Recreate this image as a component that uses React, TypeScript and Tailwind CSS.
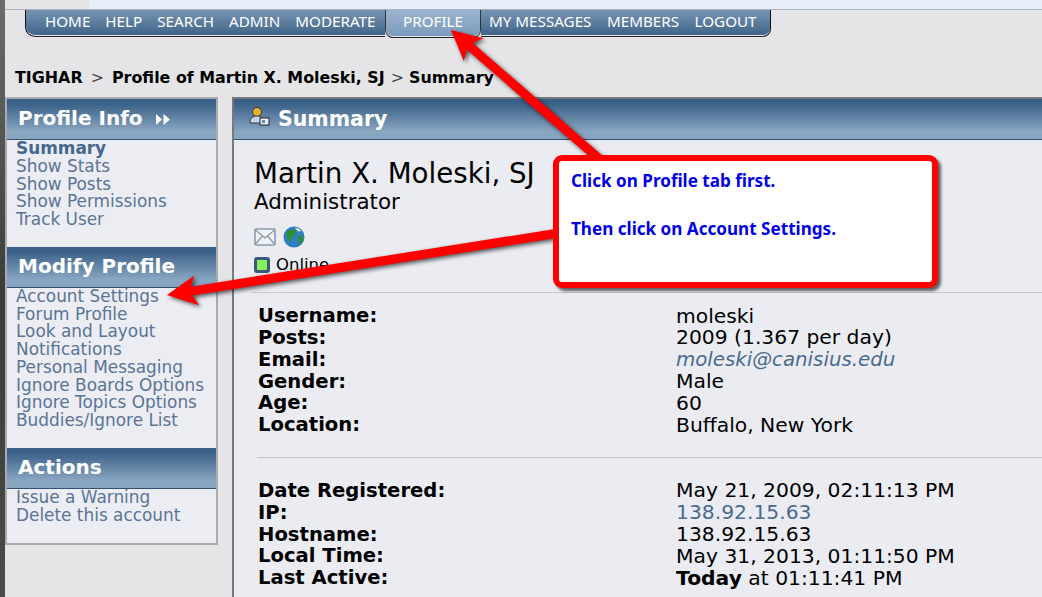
import type { ReactNode } from "react";

type Pt = [number, number];

// red snagit style arrow from tail to tip
function arrowPoints(tail: Pt, tip: Pt, shaft: number, headLen: number, headHalf: number) {
  const dx = tail[0] - tip[0];
  const dy = tail[1] - tip[1];
  const len = Math.hypot(dx, dy);
  const ux = dx / len;
  const uy = dy / len;
  const nx = -uy;
  const ny = ux;
  const at = (a: number, b: number) => `${tip[0] + ux * a + nx * b},${tip[1] + uy * a + ny * b}`;
  return [
    at(0, 0),
    at(headLen, headHalf),
    at(headLen - 5, shaft),
    at(len, shaft),
    at(len, -shaft),
    at(headLen - 5, -shaft),
    at(headLen, -headHalf),
  ].join(" ");
}

const headerBar =
  "h-[41px] flex items-center bg-gradient-to-b from-[#3a6087] from-10% to-[#88a5c1] to-80% border-b border-[#2f5070] text-white font-bold";

function SideSection({ title, icon, links }: { title: string; icon?: ReactNode; links: ReactNode[] }) {
  return (
    <div>
      <div className={`${headerBar} pb-[2px] pl-[11px] text-[20px]`}>
        {title}
        {icon}
      </div>
      <ul className="pl-[9px] text-[16.9px] leading-[17.75px] text-[#5a7496]">
        {links.map((l, i) => (
          <li key={i}>{l}</li>
        ))}
      </ul>
    </div>
  );
}

function Row({ label, children }: { label: string; children: ReactNode }) {
  return (
    <div className="flex h-[21.8px] items-center text-[20.3px] text-black">
      <div className="w-[418px] text-[19.6px] font-bold">{label}</div>
      <div>{children}</div>
    </div>
  );
}

const navLeft = ["HOME", "HELP", "SEARCH", "ADMIN", "MODERATE"];
const navRight = ["MY MESSAGES", "MEMBERS", "LOGOUT"];

export default function App() {
  return (
    <div
      className="relative flex h-[597px] w-[1042px] overflow-hidden bg-[#e5e5e8]"
      style={{ fontFamily: '"DejaVu Sans", Verdana, sans-serif' }}
    >
      <div className="w-[5px] shrink-0 bg-gradient-to-b from-[#6a6e6a] via-[#3a3c3a] to-[#4a4c4a]" />

      <div className="flex min-w-0 flex-1 flex-col">
        {/* top strip */}
        <div className="flex h-[10px] shrink-0 border-b border-[#a9b3c2]">
          <div className="w-[84px] bg-[#e5e5e8]" />
          <div className="flex-1 bg-[#e8eef7]" />
        </div>

        {/* nav */}
        <nav
          className="ml-[20px] flex h-[27px] w-[746px] items-start text-[15.2px] text-white"
          style={{ fontFamily: '"Noto Sans", Tahoma, sans-serif' }}
        >
          <div className="flex h-[27px] w-[360px] items-center gap-[15px] rounded-bl-[10px] border-b border-l border-b-[#222] border-l-[#111] bg-gradient-to-b from-[#7894b2] to-[#3d6388] pb-[4px] pl-[19px] shadow-[inset_0_-1px_0_#e8e8e8]">
            {navLeft.map((n) => (
              <span key={n}>{n}</span>
            ))}
          </div>
          <div className="flex h-[28px] w-[96px] items-center justify-center rounded-b-[8px] border-x border-b border-x-[#333] border-b-[#222] bg-gradient-to-b from-[#9ab4cf] to-[#7c9aba] pb-[5px] shadow-[inset_0_-1px_0_#e8e8e8]">
            PROFILE
          </div>
          <div className="flex h-[27px] flex-1 items-center gap-[15.5px] rounded-br-[8px] border-b border-r border-b-[#222] border-r-[#111] bg-gradient-to-b from-[#7894b2] to-[#3d6388] pb-[4px] pl-[8px] shadow-[inset_0_-1px_0_#e8e8e8]">
            {navRight.map((n) => (
              <span key={n}>{n}</span>
            ))}
          </div>
        </nav>

        {/* breadcrumb */}
        <div className="mt-[31px] flex h-[20px] shrink-0 items-center pl-[10px] text-[15.9px] font-bold text-black">
          TIGHAR
          <span className="mx-[8px] font-normal text-[#444]">&gt;</span>
          Profile of Martin X. Moleski, SJ
          <span className="ml-[6px] mr-[5px] font-normal text-[#444]">&gt;</span>
          Summary
        </div>

        <div className="mt-[9px] flex min-h-0 flex-1 items-start">
          {/* sidebar */}
          <aside className="h-[448px] w-[213px] shrink-0 border-2 border-[#aaabad] bg-[#ecedf3]">
            <SideSection
              title="Profile Info"
              icon={
                <svg width="14" height="11" viewBox="0 0 14 11" className="ml-[13px] mt-[3px]">
                  <path d="M0 0l6 5.5L0 11zM7.5 0l6.5 5.5L7.5 11z" fill="#fff" />
                </svg>
              }
              links={[
                <b key="s" className="text-[#46688c]">Summary</b>,
                "Show Stats",
                "Show Posts",
                "Show Permissions",
                "Track User",
              ]}
            />
            <div className="h-[18px]" />
            <SideSection
              title="Modify Profile"
              links={[
                "Account Settings",
                "Forum Profile",
                "Look and Layout",
                "Notifications",
                "Personal Messaging",
                "Ignore Boards Options",
                "Ignore Topics Options",
                "Buddies/Ignore List",
              ]}
            />
            <div className="h-[18px]" />
            <SideSection title="Actions" links={["Issue a Warning", "Delete this account"]} />
          </aside>

          {/* main panel */}
          <main className="ml-[14px] h-[501px] flex-1 border-l-2 border-t-2 border-[#77797d] bg-[#ebecf2]">
            <div className={`${headerBar} gap-[8px] pl-[14px] text-[20.5px]`}>
              <svg width="22" height="22" viewBox="0 0 22 22" className="mb-[5px]">
                <circle cx="9" cy="6" r="4.5" fill="#e8b030" stroke="#333" />
                <path d="M2 17c0-5 3-7 7-7s6 2 6 7z" fill="#c5d6ea" stroke="#333" />
                <rect x="12" y="12" width="9" height="7" fill="#e8eef5" stroke="#222" />
                <rect x="14" y="14" width="3" height="3" fill="#6d8cab" />
              </svg>
              Summary
            </div>

            <div className="pl-[20px] pt-[17px]">
              <div className="text-[27.7px] leading-[33px] text-black">Martin X. Moleski, SJ</div>
              <div className="text-[21.4px] leading-[24px] text-black">Administrator</div>
              <div className="mt-[11px] flex h-[24px] items-center gap-[7px]">
                <svg width="22" height="18" viewBox="0 0 22 18">
                  <rect x="1" y="1" width="20" height="16" rx="1" fill="#eef2f6" stroke="#8a9aaa" strokeWidth="1.6" />
                  <path d="M1.5 2l9.5 8 9.5-8M1.5 16l7-8M20.5 16l-7-8" fill="none" stroke="#8a9aaa" strokeWidth="1.3" />
                </svg>
                <svg width="22" height="22" viewBox="0 0 22 22">
                  <circle cx="11" cy="11" r="10.5" fill="#2f7fc0" />
                  <path d="M4 6c3-3 7-3 9-2 1 2-1 3-2 5s-3 2-3 5-3 1-4-2-1-4 0-6zM15 10c2-1 4 0 5 2 0 3-2 6-4 6-1-2 0-3-1-5z" fill="#2f8f2f" />
                  <path d="M12 2c3 0 5 1 6 3-2 1-4 0-6-3z" fill="#e8f0f8" />
                </svg>
              </div>
              <div className="mt-[4px] flex h-[24px] items-center gap-[6px] text-[16.5px] text-black">
                <span className="h-[16px] w-[16px] rounded-[3px] border-[3px] border-[#3a5a7c] bg-[#86ef5c]" />
                Online
              </div>
            </div>

            <div className="ml-[17px] mt-[15px] h-px bg-[#c8c9cd]" />

            <div className="pl-[24px] pt-[12px]">
              <Row label="Username:">moleski</Row>
              <Row label="Posts:">2009 (1.367 per day)</Row>
              <Row label="Email:">
                <i className="text-[19.8px] text-[#4a6a8e]">moleski@canisius.edu</i>
              </Row>
              <Row label="Gender:">Male</Row>
              <Row label="Age:">60</Row>
              <Row label="Location:">Buffalo, New York</Row>
            </div>

            <div className="ml-[23px] mt-[21px] h-px bg-[#c8c9cd]" />

            <div className="pl-[24px] pt-[22px]">
              <Row label="Date Registered:">May 21, 2009, 02:11:13 PM</Row>
              <Row label="IP:">
                <span className="text-[#4a6a8e]">138.92.15.63</span>
              </Row>
              <Row label="Hostname:">138.92.15.63</Row>
              <Row label="Local Time:">May 31, 2013, 01:11:50 PM</Row>
              <Row label="Last Active:">
                <b>Today</b> at 01:11:41 PM
              </Row>
            </div>
          </main>
        </div>
      </div>

      {/* annotation arrows */}
      <svg
        width="1042"
        height="597"
        viewBox="0 0 1042 597"
        className="pointer-events-none absolute left-0 top-0 drop-shadow-[2px_2px_2px_rgba(0,0,0,0.65)]"
      >
        <polygon points={arrowPoints([612, 170], [451, 30], 4.5, 30, 15)} fill="#ff0000" />
        <polygon points={arrowPoints([565, 232], [167, 295], 4.5, 30, 15)} fill="#ff0000" />
      </svg>

      {/* callout */}
      <div
        className="absolute left-[553px] top-[155px] h-[133px] w-[385px] rounded-[9px] border-[6px] border-[#ff0000] bg-white pl-[12px] pt-[8px] text-[17.1px] font-bold leading-[24px] text-[#0000e6] shadow-[3px_3px_3px_rgba(0,0,0,0.6)]"
        style={{ fontFamily: '"Noto Sans", Tahoma, sans-serif' }}
      >
        <p>Click on Profile tab first.</p>
        <p className="mt-[24px]">Then click on Account Settings.</p>
      </div>
    </div>
  );
}
